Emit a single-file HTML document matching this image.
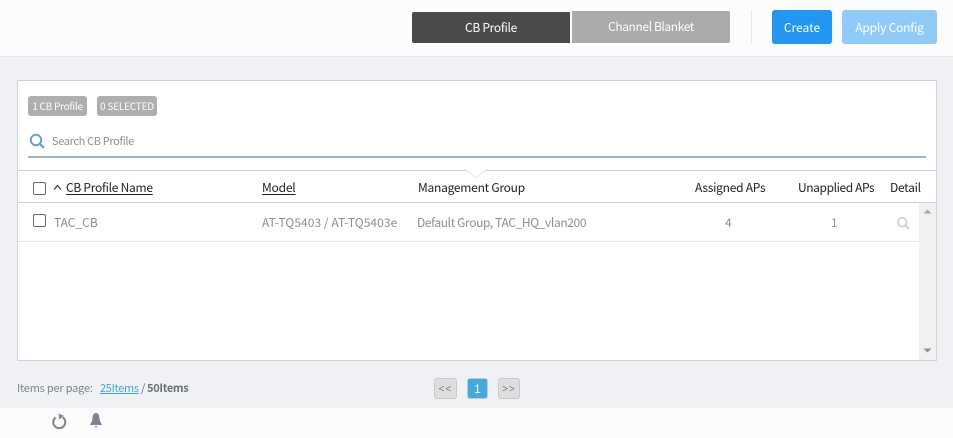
<!DOCTYPE html>
<html>
<head>
<meta charset="utf-8">
<style>
html,body{margin:0;padding:0;width:953px;height:438px;overflow:hidden;background:#f0f1f5;}
body{position:relative;font-family:"Noto Sans CJK JP","Liberation Sans",sans-serif;font-size:12px;color:#222;}
.a{position:absolute;white-space:nowrap;}
.t{line-height:16px;height:16px;}
.g{color:#8a8f96;}
.cb{position:absolute;width:11px;height:11px;border:1.4px solid #666;border-radius:2px;background:#fff;}
.u{text-decoration:underline;text-underline-offset:2px;}
</style>
</head>
<body>
<div class="a" style="left:0;top:0;width:953px;height:56px;background:#fcfcfc;border-bottom:1px solid #e4e5ea;"></div>
<div class="a t" style="left:412px;top:12px;width:158px;height:31px;background:#4c4a48;border-radius:2px 0 0 2px;color:#fff;text-align:center;line-height:32px;letter-spacing:-.3px;">CB Profile</div>
<div class="a t" style="left:572px;top:11px;width:158px;height:32px;background:#ababab;border-radius:0 2px 2px 0;color:#fff;text-align:center;line-height:31px;letter-spacing:-.4px;">Channel Blanket</div>
<div class="a" style="left:751px;top:10px;width:1px;height:34px;background:#e6e6e6;"></div>
<div class="a t" style="left:772px;top:10px;width:60px;height:34px;background:#2196f3;border-radius:3px;color:#fff;text-align:center;line-height:35px;">Create</div>
<div class="a t" style="left:842px;top:10px;width:95px;height:34px;background:#90caf9;border-radius:3px;color:#fff;text-align:center;line-height:35px;letter-spacing:-.2px;">Apply Config</div>

<div class="a" style="left:17px;top:80px;width:918px;height:279px;background:#fff;border:1px solid #cfd0d4;"></div>
<div class="a" style="left:28px;top:96px;width:59px;height:20px;background:#aeaeae;border-radius:3px;color:#fff;font-size:10px;line-height:20px;text-align:center;letter-spacing:-.25px;">1 CB Profile</div>
<div class="a" style="left:97px;top:96px;width:60px;height:20px;background:#aeaeae;border-radius:3px;color:#fff;font-size:10px;line-height:20px;text-align:center;letter-spacing:-.2px;">0 SELECTED</div>

<svg class="a" style="left:29px;top:133px;" width="17" height="17" viewBox="0 0 17 17"><circle cx="7" cy="7" r="5.2" fill="none" stroke="#64a0d8" stroke-width="2"/><path d="M10.8 10.8L15 15" stroke="#64a0d8" stroke-width="2.2" fill="none"/></svg>
<div class="a t g" style="left:52px;top:133px;font-size:11px;letter-spacing:-.35px;">Search CB Profile</div>
<div class="a" style="left:28px;top:156px;width:898px;height:2px;background:#a0b3c4;"></div>

<div class="a" style="left:18px;top:170px;width:918px;height:1px;background:#cbd2d9;"></div>
<svg class="a" style="left:466px;top:170px;" width="20" height="9" viewBox="0 0 20 9"><path d="M1 0L10 8L19 0Z" fill="#fff"/><path d="M1 .5L10 8L19 .5" fill="none" stroke="#dfe3e7"/></svg>
<div class="a" style="left:18px;top:202px;width:918px;height:1px;background:#cbd2d9;"></div>
<div class="a" style="left:18px;top:241px;width:901px;height:1px;background:#e6e6e6;"></div>
<div class="a" style="left:919px;top:203px;width:17px;height:157px;background:#f1f1f1;"></div>
<svg class="a" style="left:922px;top:208px;" width="11" height="6"><path d="M1.5 5.5L5.5 1.5L9.5 5.5Z" fill="#a8a8a8"/></svg>
<svg class="a" style="left:922px;top:348px;" width="11" height="6"><path d="M1.5 .5L5.5 4.5L9.5 .5Z" fill="#8f8f8f"/></svg>

<div class="cb" style="left:33px;top:182px;"></div>
<svg class="a" style="left:53px;top:184px;" width="9" height="7"><path d="M1 5.5L4.5 1.5L8 5.5" fill="none" stroke="#333" stroke-width="1.1"/></svg>
<div class="a t u" style="left:66px;top:180px;letter-spacing:-.27px;">CB Profile Name</div>
<div class="a t u" style="left:262px;top:180px;letter-spacing:-.2px;">Model</div>
<div class="a t" style="left:418px;top:180px;letter-spacing:-.25px;">Management Group</div>
<div class="a t" style="left:695px;top:180px;letter-spacing:-.25px;">Assigned APs</div>
<div class="a t" style="left:798px;top:180px;letter-spacing:-.4px;">Unapplied APs</div>
<div class="a t" style="left:890px;top:180px;letter-spacing:-.3px;">Detail</div>

<div class="cb" style="left:33px;top:214px;"></div>
<div class="a t g" style="left:54px;top:215px;">TAC_CB</div>
<div class="a t g" style="left:262px;top:215px;letter-spacing:.05px;">AT-TQ5403 / AT-TQ5403e</div>
<div class="a t g" style="left:417px;top:215px;letter-spacing:-.38px;">Default Group, TAC_HQ_vlan200</div>
<div class="a t g" style="left:725px;top:215px;">4</div>
<div class="a t g" style="left:831px;top:215px;">1</div>
<svg class="a" style="left:896px;top:216px;" width="15" height="15" viewBox="0 0 15 15"><circle cx="6.2" cy="6.2" r="4.4" fill="none" stroke="#d4d4d4" stroke-width="1.8"/><path d="M9.5 9.5L13 13" stroke="#d4d4d4" stroke-width="2.2"/></svg>

<div class="a t" style="left:17px;top:380px;font-size:11px;color:#7d838c;letter-spacing:-.2px;">Items per page:</div>
<div class="a t" style="left:100px;top:380px;font-size:11px;color:#42a5dc;text-decoration:underline;letter-spacing:-.3px;">25Items</div>
<div class="a t" style="left:141px;top:380px;font-size:11px;color:#6a6f78;">/</div>
<div class="a t" style="left:147px;top:380px;font-size:11px;color:#6a6f78;font-weight:bold;letter-spacing:-.3px;">50Items</div>

<div class="a" style="left:434px;top:378px;width:21px;height:19px;background:#dedede;border:1px solid #c8c8c8;border-radius:3px;color:#777;font:10px/21px 'Liberation Sans',sans-serif;letter-spacing:1px;text-align:center;">&lt;&lt;</div>
<div class="a" style="left:467px;top:378px;width:19px;height:19px;background:#42a8de;border:1px solid #c0ccd4;border-radius:3px;color:#fff;font:12px/20px 'Liberation Sans',sans-serif;text-align:center;">1</div>
<div class="a" style="left:498px;top:378px;width:20px;height:19px;background:#dedede;border:1px solid #c8c8c8;border-radius:3px;color:#777;font:10px/21px 'Liberation Sans',sans-serif;letter-spacing:1px;text-align:center;">&gt;&gt;</div>

<div class="a" style="left:0;top:408px;width:953px;height:30px;background:#fbfbfb;"></div>
<svg class="a" style="left:50px;top:412px;" width="18" height="18" viewBox="0 0 18 18"><path d="M5.6 5.4A6 6 0 1 0 12.6 5.2" fill="none" stroke="#7c8394" stroke-width="2"/><path d="M8.5 1.6L13.6 3.6L9.4 7.6Z" fill="#7c8394"/></svg>
<svg class="a" style="left:88px;top:412px;" width="16" height="17" viewBox="0 0 16 17"><path d="M8 1C5.8 1 4.8 3 4.6 5.5C4.4 8.5 3.6 10.5 2.2 12.2V13H13.8V12.2C12.4 10.5 11.6 8.5 11.4 5.5C11.2 3 10.2 1 8 1Z" fill="#7c8394"/><path d="M6.5 14.2H9.5L8 16Z" fill="#7c8394"/></svg>
</body>
</html>
